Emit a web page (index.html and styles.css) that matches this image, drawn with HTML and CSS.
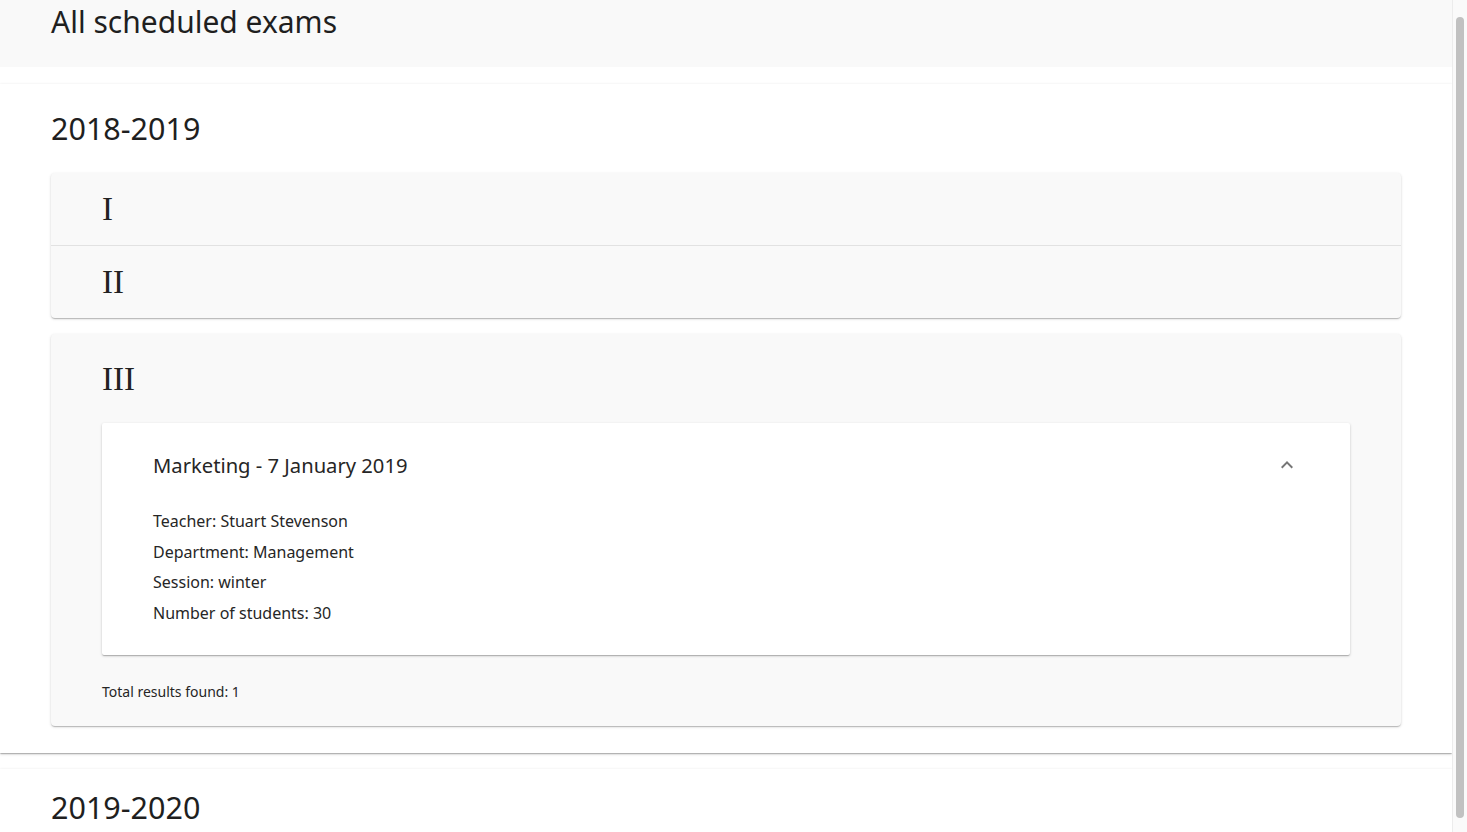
FILE: index.html
```html
<!DOCTYPE html>
<html lang="en">
<head>
<meta charset="utf-8">
<title>All scheduled exams</title>
<link rel="stylesheet" href="styles.css">
</head>
<body>
<header class="topbar">
  <h1 class="page-title">All scheduled exams</h1>
</header>
<main class="content">
  <section class="year">
    <h2 class="year-title">2018-2019</h2>
    <div class="accordion">
      <div class="panel-group">
        <div class="panel">
          <div class="panel-head"><span class="numeral">I</span></div>
        </div>
        <div class="panel panel-divided">
          <div class="panel-head"><span class="numeral">II</span></div>
        </div>
      </div>
      <div class="panel-group panel-expanded">
        <div class="panel">
          <div class="panel-head panel-head-open"><span class="numeral">III</span></div>
          <div class="panel-body">
            <div class="exam-card">
              <div class="exam-head">
                <span class="exam-title">Marketing - 7 January 2019</span>
                <svg class="chevron" viewBox="0 0 24 24" width="24" height="24" aria-hidden="true"><path d="M12 8l-6 6 1.41 1.41L12 10.83l4.59 4.58L18 14z"/></svg>
              </div>
              <ul class="exam-details">
                <li>Teacher: Stuart Stevenson</li>
                <li>Department: Management</li>
                <li>Session: winter</li>
                <li>Number of students: 30</li>
              </ul>
            </div>
            <p class="total">Total results found: 1</p>
          </div>
        </div>
      </div>
    </div>
  </section>
  <section class="year">
    <h2 class="year-title">2019-2020</h2>
  </section>
</main>
<div class="scrollbar" aria-hidden="true"><div class="scrollbar-thumb"></div></div>
</body>
</html>
```
FILE: styles.css
```css
html, body {
  margin: 0;
  padding: 0;
  background: #ffffff;
}

body {
  font-family: "Noto Sans", "Open Sans", sans-serif;
  color: rgba(0, 0, 0, 0.87);
  margin-right: 15px;
}

.topbar {
  height: 67px;
  background: #f9f9f9;
  padding: 0 51px;
  box-sizing: border-box;
}

.page-title {
  margin: 0;
  font-size: 30px;
  font-weight: 400;
  line-height: 43px;
  color: #1f1f1f;
}

.content {
  padding-top: 17px;
}

.year {
  background: #ffffff;
  padding: 23px 51px 27px;
  box-shadow: 0 1px 3px rgba(0, 0, 0, 0.18), 0 1px 1px rgba(0, 0, 0, 0.12), 0 2px 1px -1px rgba(0, 0, 0, 0.1);
  margin-bottom: 16px;
}

.year:last-child {
  padding-top: 17px;
  padding-bottom: 40px;
  margin-bottom: 0;
}

.year-title {
  margin: 0 0 24px;
  font-size: 30.5px;
  font-weight: 400;
  line-height: 42px;
  color: #1f1f1f;
}

.year:last-child .year-title {
  margin: 0;
}

.accordion {
  display: flex;
  flex-direction: column;
  gap: 16px;
}

.panel-group {
  background: #f9f9f9;
  border-radius: 4px;
  box-shadow: 0 1px 3px rgba(0, 0, 0, 0.16), 0 1px 1px rgba(0, 0, 0, 0.1), 0 2px 1px -1px rgba(0, 0, 0, 0.1);
}

.panel-divided {
  border-top: 1px solid #e2e2e2;
}

.panel-head {
  height: 72px;
  display: flex;
  align-items: center;
  padding: 0 51px;
}

.panel-head-open {
  height: 89px;
  padding-top: 2px;
  box-sizing: border-box;
}

.numeral {
  font-family: "Liberation Serif", "Times New Roman", serif;
  font-size: 33px;
  line-height: 1;
  color: #222222;
}

.panel-body {
  padding: 0 51px 24px;
}

.exam-card {
  background: #ffffff;
  border-radius: 2px;
  box-shadow: 0 1px 3px rgba(0, 0, 0, 0.18), 0 1px 1px rgba(0, 0, 0, 0.12), 0 2px 1px -1px rgba(0, 0, 0, 0.1);
  padding: 0 51px 27px;
}

.exam-head {
  height: 83px;
  display: flex;
  align-items: center;
  justify-content: space-between;
}

.exam-title {
  font-size: 20.2px;
  color: #262626;
}

.chevron {
  fill: rgba(0, 0, 0, 0.54);
}

.exam-details {
  list-style: none;
  margin: 0;
  padding: 0;
  font-size: 16px;
  line-height: 30.5px;
  color: #262626;
}

.total {
  margin: 27px 0 0;
  font-size: 14px;
  line-height: 20px;
  color: #262626;
}

.scrollbar {
  position: fixed;
  top: 0;
  right: 0;
  width: 15px;
  height: 100vh;
  box-sizing: border-box;
  background: #fafafa;
  border-left: 1px solid #ececec;
  padding: 17px 3px 14px 3px;
}

.scrollbar-thumb {
  height: 100%;
  background: #c1c1c1;
  border-radius: 4px;
}
```
